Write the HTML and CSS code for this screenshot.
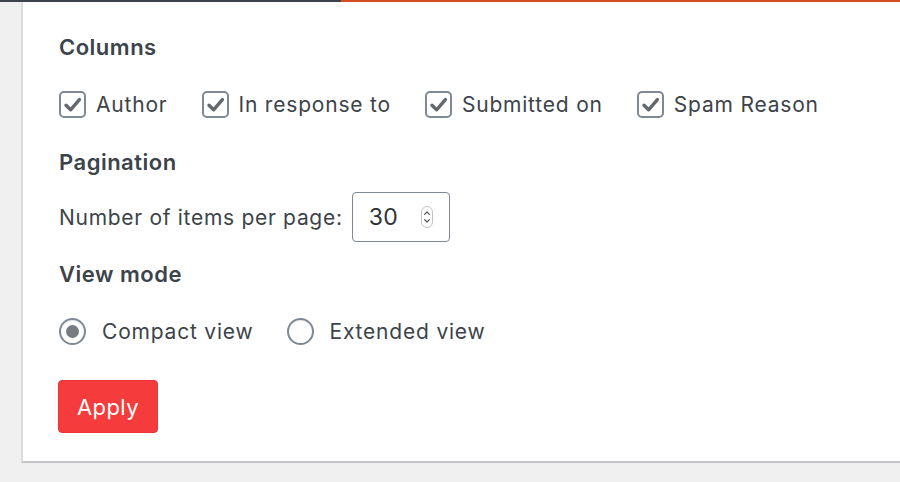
FILE: index.html
```html
<!DOCTYPE html>
<html lang="en">

<head>
    <meta charset="UTF-8">
    <meta name="viewport" content="width=device-width, initial-scale=1.0">
    <title>Screen Options</title>

    <link rel="stylesheet" href="styles.css">

</head>


<body>

    <div class="top-strip">
        <div class="strip-dark"></div>
        <div class="strip-orange"></div>
    </div>

    <div class="panel">

        <h3 class="heading heading-first">Columns</h3>
        <div class="option-row">
            <label class="option"><span class="check"><svg viewBox="0 0 27 27" width="27" height="27"><path d="M7 14.2 L11.6 18.8 L20.4 8.6" fill="none" stroke="#646970" stroke-width="3.4" stroke-linecap="round" stroke-linejoin="round"/></svg></span>Author</label>
            <label class="option"><span class="check"><svg viewBox="0 0 27 27" width="27" height="27"><path d="M7 14.2 L11.6 18.8 L20.4 8.6" fill="none" stroke="#646970" stroke-width="3.4" stroke-linecap="round" stroke-linejoin="round"/></svg></span>In response to</label>
            <label class="option"><span class="check"><svg viewBox="0 0 27 27" width="27" height="27"><path d="M7 14.2 L11.6 18.8 L20.4 8.6" fill="none" stroke="#646970" stroke-width="3.4" stroke-linecap="round" stroke-linejoin="round"/></svg></span>Submitted on</label>
            <label class="option"><span class="check"><svg viewBox="0 0 27 27" width="27" height="27"><path d="M7 14.2 L11.6 18.8 L20.4 8.6" fill="none" stroke="#646970" stroke-width="3.4" stroke-linecap="round" stroke-linejoin="round"/></svg></span>Spam Reason</label>
        </div>

        <h3 class="heading">Pagination</h3>
        <div class="per-page">
            <span>Number of items per page:</span>
            <div class="number-box">
                <span class="number-value">30</span>
                <svg class="spinner" viewBox="0 0 12 22" width="12" height="22">
                    <rect x="0.5" y="0.5" width="11" height="21" rx="5.5" fill="#fff" stroke="#c3c4c7"/>
                    <path d="M3.6 8.4 L6 6 L8.4 8.4 M3.6 13.6 L6 16 L8.4 13.6" fill="none" stroke="#50575e" stroke-width="1.2" stroke-linecap="round" stroke-linejoin="round"/>
                </svg>
            </div>
        </div>

        <h3 class="heading">View mode</h3>
        <div class="option-row radio-row">
            <label class="option"><span class="radio checked"></span>Compact view</label>
            <label class="option"><span class="radio"></span>Extended view</label>
        </div>

        <button class="apply">Apply</button>

    </div>

</body>

</html>
```

FILE: styles.css
```css
body {
    margin: 0;
    background: #f0f0f1;
    font-family: Inter, "Noto Sans", sans-serif;
    color: #3c434a;
}

.top-strip {
    display: flex;
    height: 2px;
}

.strip-dark {
    width: 341px;
    background: #3c434a;
}

.strip-orange {
    flex: 1;
    background: #d54e21;
}

.panel {
    margin-left: 21px;
    height: 461px;
    box-sizing: border-box;
    background: #fff;
    border-left: 2px solid #dcdcde;
    border-bottom: 2px solid #c3c4c7;
    padding: 30px 0 0 36px;
}

.heading {
    margin: 29px 0 0 0;
    font-size: 22px;
    font-weight: 600;
    letter-spacing: 0.5px;
    line-height: 30px;
    color: #3c434a;
}

.heading-first {
    margin-top: 0;
}

.option-row {
    display: flex;
    margin-top: 28px;
    gap: 34px;
    height: 28px;
    align-items: center;
    font-size: 21px;
    letter-spacing: 0.8px;
}

.option {
    display: flex;
    align-items: center;
    gap: 10px;
}

.check {
    width: 27px;
    height: 27px;
    box-sizing: border-box;
    border: 2px solid #7e8993;
    border-radius: 5px;
    position: relative;
}

.check svg {
    position: absolute;
    left: -2px;
    top: -2px;
}

.per-page {
    display: flex;
    align-items: center;
    gap: 9px;
    margin-top: 15px;
    font-size: 21px;
    letter-spacing: 0.7px;
}

.number-box {
    width: 98px;
    height: 50px;
    box-sizing: border-box;
    border: 1px solid #7e8993;
    border-radius: 4px;
    display: flex;
    align-items: center;
    padding-left: 16px;
    color: #2c3338;
}

.number-value {
    font-size: 23px;
    letter-spacing: 0.5px;
    width: 52px;
}

.spinner {
    display: block;
}

.per-page + .heading {
    margin-top: 17px;
}

.radio-row {
    gap: 33px;
}

.radio-row .option {
    gap: 16px;
}

.radio {
    width: 27px;
    height: 27px;
    box-sizing: border-box;
    border: 2px solid #7e8993;
    border-radius: 50%;
    box-shadow: inset 0 1px 2px rgba(0, 0, 0, 0.1);
    display: flex;
    align-items: center;
    justify-content: center;
}

.radio.checked::before {
    content: "";
    width: 13px;
    height: 13px;
    border-radius: 50%;
    background: #787c82;
}

.apply {
    display: block;
    margin-top: 35px;
    margin-left: -1px;
    width: 100px;
    height: 53px;
    background: #f53b3b;
    border: 1px solid #e8353a;
    border-radius: 4px;
    color: #fff;
    font-family: Inter, "Noto Sans", sans-serif;
    font-size: 22px;
    letter-spacing: 0.4px;
    padding: 0;
}
```
